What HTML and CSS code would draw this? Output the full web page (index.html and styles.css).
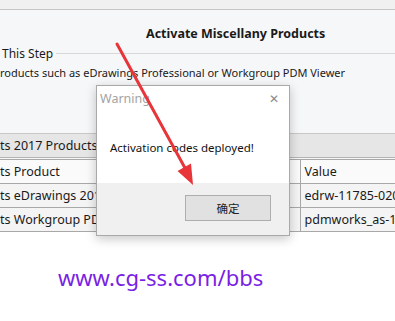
FILE: index.html
```html
<!DOCTYPE html>
<html lang="en">
<head>
    <meta charset="UTF-8">
    <meta name="viewport" content="width=device-width, initial-scale=1.0">
    <title>Activate Miscellany Products</title>
    <link rel="stylesheet" href="styles.css">
</head>
<body>
    <div class="screen">
        <div class="app">
            <div class="topstrip"></div>
            <div class="header"><h1>Activate Miscellany Products</h1></div>
            <div class="group">
                <div class="group-title"><span>This Step</span></div>
                <p class="desc">roducts such as eDrawings Professional or Workgroup PDM Viewer</p>
            </div>
            <div class="section-bar">ts 2017 Products</div>
            <table class="codes">
                <colgroup><col class="c-name"><col class="c-val"></colgroup>
                <tr><th>ts Product</th><th class="val">Value</th></tr>
                <tr><td>ts eDrawings 2017</td><td class="val">edrw-11785-020</td></tr>
                <tr><td>ts Workgroup PDM Viewer</td><td class="val">pdmworks_as-1</td></tr>
            </table>
        </div>
        <div class="watermark">www.cg-ss.com/bbs</div>

        <div class="dialog">
            <div class="dialog-title">
                <span>Warning</span>
                <span class="close">&#x2715;</span>
            </div>
            <div class="dialog-body">Activation codes deployed!</div>
            <div class="dialog-foot"><button>确定</button></div>
        </div>

        <svg class="arrow" width="395" height="321" viewBox="0 0 395 321">
            <line x1="117" y1="44" x2="185" y2="168" stroke="#e8353a" stroke-width="3" stroke-linecap="round"/>
            <polygon points="193,185 177.5,171 191,163.5" fill="#e8353a"/>
        </svg>
    </div>
</body>
</html>
```

FILE: styles.css
```css
body { margin: 0; background: #fff; font-family: "Noto Sans", "Noto Sans CJK SC", sans-serif; color: #1a1a1a; }
.screen { position: relative; width: 395px; height: 321px; overflow: hidden; }
.app { background: #f6f7f9; }
.topstrip { height: 9px; background: #f0f0f0; border-bottom: 1px solid #c4c4c4; }
.header { height: 43px; }
.header h1 { margin: 0; padding: 15px 0 0 146px; font-size: 12.5px; font-weight: bold; line-height: 18px; }
.group { height: 80px; padding-top: 7px; box-sizing: border-box; }
.group-title { display: flex; align-items: center; height: 16px; margin-top: -15px; font-size: 12px; }
.group-title span { padding: 0 3px 0 2px; }
.group-title::after { content: ""; flex: 1; border-top: 1px solid #d8d8d8; }
.desc { margin: 4px 0 0; font-size: 11px; line-height: 16px; white-space: nowrap; }
.section-bar { height: 23px; line-height: 23px; background: #e6e6e6; border-top: 1px solid #c8c8c8; border-bottom: 1px solid #b4b4b4; font-size: 12.5px; white-space: nowrap; }
.codes { border-collapse: collapse; table-layout: fixed; margin-top: 1px; width: 400px; font-size: 12.5px; background: #f4f4f4; }
.c-name { width: 300px; }
.c-val { width: 100px; }
.codes th, .codes td { height: 23px; padding: 0; text-align: left; font-weight: normal; border-top: 1px solid #a8a8a8; border-bottom: 1px solid #a8a8a8; white-space: nowrap; overflow: hidden; }
.codes th { background: #fafafa; }
.codes th:first-child, .codes td:first-child { border-right: 1px solid #a8a8a8; }
.codes .val { padding-left: 4px; }
.watermark { padding: 30px 0 0 58px; font-size: 22px; line-height: 30px; color: #7a1fe4; }
.dialog { position: absolute; left: 96px; top: 85px; width: 192px; height: 149px; background: #fff; border: 1px solid #a9a9a9; box-shadow: 0 3px 10px rgba(0, 0, 0, 0.22); display: flex; flex-direction: column; }
.dialog-title { display: flex; justify-content: space-between; align-items: center; height: 24px; padding: 0 10px 0 3px; color: #a3a3a3; font-size: 12.5px; }
.close { font-size: 12px; color: #8a8a8a; }
.dialog-body { flex: 1; padding: 30px 0 0 13px; font-size: 11.5px; color: #111; }
.dialog-foot { height: 52px; background: #f0f0f0; display: flex; justify-content: flex-end; align-items: flex-start; padding: 12px 18px 0 0; box-sizing: border-box; }
.dialog-foot button { width: 86px; height: 26px; background: #e1e1e1; border: 1px solid #adadad; font-family: "Noto Sans CJK SC", sans-serif; font-size: 11.5px; color: #222; }
.arrow { position: absolute; left: 0; top: 0; pointer-events: none; }
```
